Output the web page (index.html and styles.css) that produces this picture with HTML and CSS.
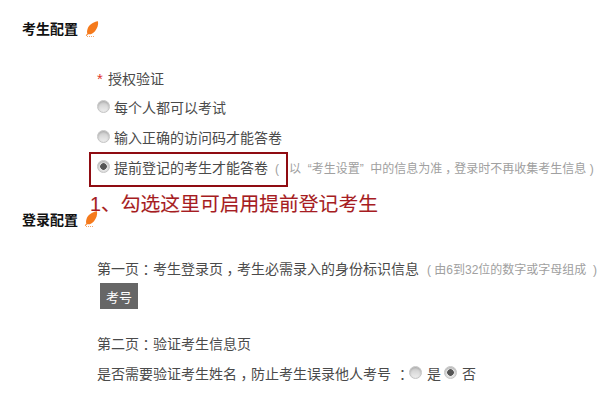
FILE: index.html
```html
<!DOCTYPE html>
<html lang="zh-CN">
<head>
<meta charset="utf-8">
<title>考生配置</title>
<link rel="stylesheet" href="styles.css">
</head>
<body>
<svg class="defs" width="0" height="0" aria-hidden="true">
  <symbol id="quill" viewBox="0 0 14 16">
    <path d="M13 0.3C8 1 3.6 4 2.4 8.4C1.9 10.2 1.9 11.6 2.4 12.6C1.8 13.2 1.2 13.9 0.8 14.5L1.5 15C1.9 14.3 2.5 13.7 3.2 13.2C5.4 13.8 8 12.6 10 10.2C12.4 7.2 13.6 3.8 13 0.3Z" fill="#f57a1c"/>
    <path d="M2 15.5H10" stroke="#f7a468" stroke-width="1" stroke-dasharray="1 1" fill="none"/>
  </symbol>
</svg>
<main class="page">
  <h2 class="title title-first">考生配置<svg class="quill"><use href="#quill"/></svg></h2>
  <section class="group group-auth">
    <p class="row row-head"><span class="star">*</span>授权验证</p>
    <p class="row"><span class="radio"></span><span class="label">每个人都可以考试</span></p>
    <p class="row"><span class="radio"></span><span class="label">输入正确的访问码才能答卷</span></p>
    <p class="row"><span class="radio on"></span><span class="label">提前登记的考生才能答卷</span><span class="hint hint-a">(&nbsp;&nbsp; 以 &nbsp;“考生设置”&nbsp; 中的信息为准<span class="pc">，</span>登录时不再收集考生信息 )</span></p>
  </section>
  <h2 class="title title-second">登录配置<svg class="quill"><use href="#quill"/></svg></h2>
  <section class="group group-login">
    <p class="row">第一页<span class="pc">：</span>考生登录页<span class="pc">，</span>考生必需录入的身份标识信息<span class="hint hint-b">( 由6到32位的数字或字母组成&nbsp; )</span></p>
    <span class="tag">考号</span>
    <p class="row row-page2">第二页<span class="pc">：</span>验证考生信息页</p>
    <p class="row">是否需要验证考生姓名<span class="pc">，</span>防止考生误录他人考号<span class="colon">：</span><span class="radio inline"></span><span class="opt">是</span><span class="radio on inline"></span><span class="opt">否</span></p>
  </section>
  <div class="callout-box"></div>
  <div class="callout-text">1、勾选这里可启用提前登记考生</div>
</main>
</body>
</html>
```
FILE: styles.css
```css
* { box-sizing: border-box; }
html, body { margin: 0; padding: 0; background: #fff; overflow: hidden; }
body { width: 600px; height: 400px; font-family: "Liberation Sans", "Noto Sans CJK SC", sans-serif; font-size: 14px; color: #4a4a4a; }
.defs { position: absolute; }
.page { position: relative; width: 600px; height: 400px; padding: 18px 0 0 22px; }
.title { display: flex; align-items: center; height: 20px; margin: 0; font-size: 14px; font-weight: 700; color: #111; }
.quill { width: 14px; height: 16px; margin-left: 7px; }
.title-first .quill { margin-top: 2px; }
.title-second .quill { margin-left: 6px; margin-top: 0; }
.group { padding-left: 75px; }
.group-auth { margin-top: 31px; }
.group-login { margin-top: 30px; }
.title-second { margin-top: 31px; }
.row { height: 20px; line-height: 20px; margin: 0 0 10px; white-space: nowrap; }
.row-head { margin-bottom: 9px; }
.star { display: inline-block; width: 11px; color: #e0352b; font-size: 15px; }
.radio { display: inline-block; vertical-align: middle; width: 13px; height: 13px; margin: -5px 4px 0 0; border-radius: 50%; border: 1px solid #c4c4c4; background: linear-gradient(#c9c9c9, #efefef); box-shadow: inset 0 1px 2px #aaa; }
.radio.on { background: radial-gradient(circle, #555 0 3px, #e4e4e4 3.6px); }
.radio.inline { margin: -5px 0 0 0; }
.pc { font-feature-settings: "halt"; padding: 0 0.25em; }
.colon { font-feature-settings: "halt"; padding: 0 3px 0 8px; }
.hint { color: #a0a0a0; font-size: 12px; }
.hint-a { margin-left: 7px; }
.hint-b { margin-left: 8px; }
.opt { margin: 0 3px 0 5px; }
.tag { display: flex; align-items: center; justify-content: center; width: 38px; height: 26px; margin: -6px 0 0 3px; background: #666; color: #fff; font-size: 13px; }
.row-page2 { margin-top: 25px; }
.callout-box { position: absolute; left: 89px; top: 152px; width: 199px; height: 35px; border: 2px solid #8f0c12; }
.callout-text { position: absolute; left: 90px; top: 190px; font-size: 19.8px; line-height: 28px; color: #a61c22; white-space: nowrap; -webkit-text-stroke: 0.1px #a61c22; }
```
